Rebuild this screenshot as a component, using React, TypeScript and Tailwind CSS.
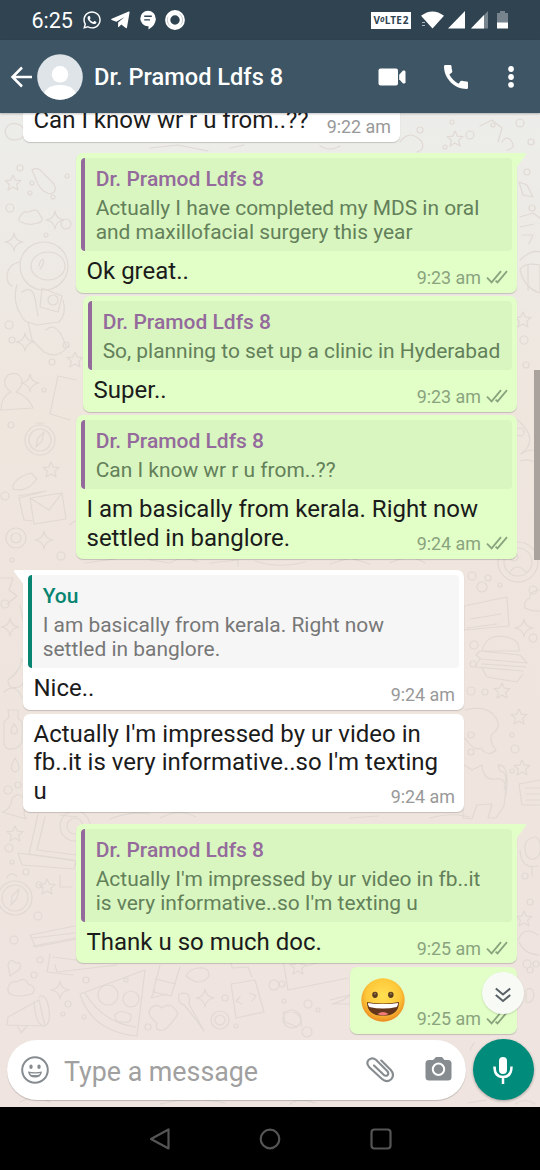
import type { ReactNode } from "react";
import { FaWhatsapp } from "react-icons/fa";

function Doodles() {
  const dots: [number, number, number][] = [
    [20, 168, 3], [32, 183, 2], [53, 197, 2], [10, 208, 4], [66, 224, 5], [30, 193, 2], [67, 176, 2], [46, 235, 2], [12, 340, 3],
    [9, 325, 4], [52, 362, 3], [66, 345, 3], [44, 390, 2], [11, 425, 3], [5, 496, 4], [61, 556, 4], [5, 604, 4], [12, 560, 2],
    [8, 790, 4], [18, 785, 3], [9, 848, 4], [26, 872, 3], [39, 885, 3], [38, 916, 4], [14, 940, 4], [40, 960, 3], [12, 862, 2],
    [86, 980, 3], [68, 1004, 3], [63, 1014, 2], [84, 1017, 2], [126, 980, 2], [148, 1027, 3], [225, 998, 3], [236, 1026, 2], [34, 975, 3],
    [527, 172, 3], [532, 208, 3], [524, 340, 4], [526, 365, 3], [531, 142, 3], [520, 432, 4], [472, 576, 4], [482, 587, 5],
    [474, 645, 4], [533, 638, 4], [471, 691, 4], [485, 692, 3], [488, 578, 3], [500, 585, 2], [473, 664, 3], [533, 590, 4],
    [471, 752, 3], [515, 749, 4], [512, 735, 2], [512, 771, 2], [525, 876, 3], [530, 902, 3], [527, 964, 4], [471, 735, 3],
    [536, 964, 3], [282, 984, 3], [274, 985, 5], [308, 1004, 4], [318, 1010, 2], [307, 1032, 5], [284, 1001, 2], [530, 970, 3],
    [420, 130, 3], [452, 122, 2], [470, 135, 4], [493, 125, 2], [520, 123, 4], [445, 147, 2],
  ];
  const stars: [number, number][] = [
    [13, 183], [51, 470], [15, 834], [47, 887], [455, 139], [502, 691], [519, 717], [522, 768], [524, 919], [298, 967], [75, 360], [523, 320],
  ];
  const sparks: [number, number][] = [
    [55, 220], [14, 242], [25, 342], [30, 383], [44, 540], [10, 627], [60, 990], [205, 998], [524, 628],
  ];
  return (
    <svg className="pointer-events-none absolute inset-0 h-full w-full" viewBox="0 113 540 994" fill="none" stroke="#e1d9d3" strokeWidth="1.2" strokeLinejoin="round" strokeLinecap="round" aria-hidden="true">
      {dots.map(([x, y, r], i) => <circle key={i} cx={x} cy={y} r={r} />)}
      {stars.map(([x, y], i) => (
        <path key={i} transform={`translate(${x} ${y})`} d="M0-8 2.4-2.8 8-2.4 3.6 1.2 5 7 0 4-5 7-3.6 1.2-8-2.4-2.4-2.8Z" />
      ))}
      {sparks.map(([x, y], i) => (
        <path key={i} transform={`translate(${x} ${y})`} d="M0-9Q1-1 9 0 1 1 0 9-1 1-9 0-1-1 0-9Z" />
      ))}
      <path d="M32 170q6-4 12 4l10 10q4 8-4 10-8-2-12-10zM20 217q2-6 9-5 8-5 11 3 5 6-2 8-10 3-17-1-4-2-1-5z" />
      <circle cx="44" cy="266" r="24" /><ellipse cx="48" cy="266" rx="17" ry="14" /><path d="M39 266q1-6 4-7 2 4-3 10M20 262q-12 2-13 14 0 8 5 10M17 285q-6 18 8 36l12 4 22-3q8-8 4-22M22 292q12-8 14 12l2 12M42 288l20 8-4 16-18-5zM28 322l4 18 12 12q14 8 24-6M46 330q8-8 16 6l4 10" />
      <circle cx="53" cy="300" r="5" />
      <path d="m58 376 18 4M58 376l-8 38 20 6M1 410q0-14 10-18Q0 384 8 375q10-5 14 5 0 8-6 12 12 4 17 16Z" />
      <circle cx="40" cy="440" r="15" /><circle cx="40" cy="440" r="11" /><path d="m36 447 2-9 6-6-2 9zM36 423h8M13 485q4-8 18-12l6 6q-10 14-24 10z" />
      <path d="m30 498 32-5 4 26-32 5zm0 0 19 12 13-17M18 496l28-5-27 7 5 22 8 1" />
      <circle cx="16" cy="538" r="10" /><circle cx="16" cy="538" r="5" /><path d="M1 578h12l-4 12 8 6-10 8M20 605l6 30M8 680q14-10 13-22 10 16 0 28-13 5-13-6zM4 692q12-10 18 6M70 525q10-12 10 12" />
      <path d="M8 710h10v8l4 4v20q-6 10-16 6l-2-4v-22l5-5zM14 724q-6 9 0 10 7-2 0-10M15 758q-7 12 0 14 8-2 0-14M2 812q9-2 10-13 8-10 13 3l-1 12 2 5zM38 814l-9 40 45 6M45 817l-8 33 40 5M18 853l58 8-2 8-52-4z" />
      <circle cx="75" cy="826" r="15" /><circle cx="75" cy="826" r="8" />
      <circle cx="15" cy="898" r="17" /><circle cx="15" cy="898" r="13" /><path d="m11 905 1-9 7-7-2 9zM7 878q2-7 10-2M30 935l45-9M33 938l42-5M33 946l42-8M30 935q5 10 5 12l42-8M50 954l-3 18 26 3M53 957l23 3M60 875v12h12M8 965q2-8 8-2 6-2 4 6l-10 7zM8 988q2-8 9-6 8-6 11 2 10 3 4 10-15 4-22 0-3-3-2-6z" />
      <path d="m8 1017 31-17 6 26-38-1zM17 1025l4 8 6-7M39 997q7-5 10 12 2 17-6 17-8-3-9-25" />
      <path d="m80 994 65-24-8 66q-45-4-57-42zm5-1q18 30 51 34" /><circle cx="108" cy="995" r="10" /><circle cx="131" cy="999" r="8" /><path d="M115 1015q5-7 16 0 1 9-8 7-9 1-8-7zM55 965l2 7 60-7M160 965l-7 27 18 4 9-29M155 979l21 5M155 990l-4 8 16-4M186 976q3-7 12-8 12-1 11 8-9 12-23 0zM151 1008q5-5 11 0 9-8 16 6-8 12-14 16-10 2-7-7-12-9-6-15zM179 994q13-4 10 10l15 27q-8-12-20-26-7-2-5-11z" />
      <circle cx="220" cy="1020" r="9" /><circle cx="220" cy="1020" r="5" /><path d="M220 963q12-4 12 5l16-1 4 10M231 984l24-4 9 32-28 6zM240 997l-4 4 6 3M250 993l6 3-4 5M283 960l5 30 60-12M305 966l30-7M330 1000l20-5q-6 6-18 9h18M290 1012h-7l2 10 12 5M293 1012q10 3 8 14" /><circle cx="292" cy="1019" r="9" />
      <path d="M400 142q10-14 22 0 3 8-5 10M480 126l12-6 10 8-4 14M60 127q16 12 34 12M150 148l28-3 30 6M5 130q5-10 15-5 10 8 0 14-14 4-15-9M320 146q10 6 20 0M230 148l14-3M502 142q5-8 10 0 4 6-5 8" />
      <path d="m519 182 8 3 6 12-10-2zM520 217l13-4 7 5M520 227l14-3M522 235h11l-4 9M520 260q12-11 20-8M520 270q4-8 20-5v28q-15-4-20-23M528 265v25M518 420q22 20 3 34 12-8 19 0M520 461q12-4 20 6" />
      <circle cx="518" cy="562" r="20" /><circle cx="518" cy="562" r="14" /><path d="M510 572q7-10 16 0" /><circle cx="514" cy="557" r="4" />
      <path d="m464 606 43-9 2 29-45 4zM470 619l31-5M467 628l30-4M540 590q-12 2-10 8-7 3-5 10 8 4 15 3M482 651q5-20 28-13 10 3 9 13zM480 651l40 4 7 8-46-4-5-4zM482 664l44 3M480 659l-5 8 48 4M482 668l5 9 30 5 6-8" />
      <path d="M465 710q22-6 31 8 6 10-4 16-3 8 4 16-8 8-15-2-7 4-16-10M464 765l8 5 10-5q1 16 14 14 8-2 10 9l-2 18-8 12h-8l4-14-15 1-5 14-9-1V765M504 790q5-18-4-19l-2-6q12-1 8 29M519 784l21-4M519 784l3 21h18M526 788h14M526 794h14M526 800h14" />
      <path d="M110 819q20-8 40-5M160 818q20-10 36-1M350 818l28-2M430 818q20-6 40-1M60 815l18 2M85 563l30-4M150 560l20 3q12-8 28-1M210 563l28-3v6M255 561q25 8 50 1M330 564l20-6 20 6M390 563q20-10 35 0M525 845q2-7 10-8 7 2 5 15-2 8-9 7-7-2-6-14M520 850q1 20 18 16M532 866v10M518 940q6-15 20-5M519 942q5 12 20 13M526 990q7-5 8 6-2 8-8 6z" />
      <path d="M20 1102q15-8 30 0M160 1104q30-8 65-1M290 1104q8-7 25-1M468 1103l18-3M515 1104q10-7 20 0M470 1050l4-7" />
    </svg>
  );
}

function Ticks() {
  return (
    <svg className="h-4 w-[22px]" viewBox="0 0 22 16" fill="none" stroke="currentColor" strokeWidth="1.8" aria-hidden="true">
      <path d="m1 7.600 4.600 4.800L15 1.200M9.600 10.600l1.900 1.800L21 1.200" />
    </svg>
  );
}

function Time({ value, sent = false }: { value: string; sent?: boolean }) {
  return (
    <div className={`relative mr-[4px] -mt-[18px] flex h-5 items-center gap-[5px] self-end text-[17.900px] leading-5 ${sent ? "text-[#8aa37e]" : "text-[#999999]"}`}>
      <span>{value}</span>
      {sent && <Ticks />}
    </div>
  );
}

function Quote({ author, lines, sent = false }: { author: string; lines: string[]; sent?: boolean }) {
  return (
    <div className={`flex shrink-0 overflow-hidden rounded-[4px] ${sent ? "bg-[#d9f6c0]" : "bg-[#f6f6f6]"}`}>
      <div className={`w-1 shrink-0 rounded-l-[3px] ${sent ? "bg-[#94699c]" : "bg-[#088571]"}`} />
      <div className="pt-[9px] pb-[6.500px] pl-[10.700px] text-[20.930px]">
        <div className={`mb-[4.500px] h-6 text-[21px] leading-6 font-medium ${sent ? "text-[#94699c]" : "text-[#088571]"}`}>{author}</div>
        {lines.map((l) => (
          <div key={l} className={`leading-[24.500px] whitespace-nowrap ${sent ? "text-[#63805a]" : "text-[#777777]"}`}>{l}</div>
        ))}
      </div>
    </div>
  );
}

interface BubbleProps {
  sent?: boolean;
  tail?: boolean;
  className: string;
  children: ReactNode;
}

function Bubble({ sent = false, tail = false, className, children }: BubbleProps) {
  const corner = tail ? (sent ? "rounded-tr-none" : "rounded-tl-none") : "";
  return (
    <section className={`relative flex shrink-0 flex-col rounded-[7px] p-[5px] shadow-[0_1px_1px_rgba(0,0,0,0.18)] ${sent ? "mr-[23px] self-end bg-[#e1ffc7]" : "ml-[23px] self-start bg-white"} ${corner} ${className}`}>
      {tail && (
        <svg className={`absolute top-0 h-[15px] w-[11px] ${sent ? "-right-[10px] text-[#e1ffc7]" : "-left-[10px] -scale-x-100 text-white"}`} viewBox="0 0 11 15" aria-hidden="true">
          <path d="M0 0h9.200q1.600.4.500 1.900L1 13.400V15H0Z" fill="currentColor" />
        </svg>
      )}
      {children}
    </section>
  );
}

function Body({ lines, className = "" }: { lines: string[]; className?: string }) {
  return (
    <div className={`pr-[6px] pl-[5.500px] text-[24px] leading-[28.500px] whitespace-nowrap ${className}`}>
      {lines.map((l) => <div key={l}>{l}</div>)}
    </div>
  );
}

function Grin() {
  return (
    <svg className="h-[44px] w-[44px]" viewBox="0 0 44 44" role="img" aria-label="grinning face">
      <defs>
        <radialGradient id="face" cx=".5" cy=".4" r=".6">
          <stop offset="0" stopColor="#ffe052" />
          <stop offset=".65" stopColor="#fdc83a" />
          <stop offset="1" stopColor="#ec8a20" />
        </radialGradient>
      </defs>
      <circle cx="22" cy="22" r="21.700" fill="url(#face)" />
      <ellipse cx="14" cy="16.800" rx="2.800" ry="3.100" fill="#5b3e22" />
      <ellipse cx="29.800" cy="16.800" rx="2.800" ry="3.100" fill="#5b3e22" />
      <circle cx="14" cy="15.700" r=".9" fill="#a9814c" />
      <circle cx="29.800" cy="15.700" r=".9" fill="#a9814c" />
      <path d="M6 24q16 3 32 0 0 13.800-16 13.800T6 24Z" fill="#63351b" />
      <path d="M7 24.900q15 2.400 30 0 .2 2.900-1.300 4.100-13.700 3-27.400 0Q6.800 27.500 7 24.900Z" fill="#fff" />
      <path d="M16.500 36q5.500-4 11 0-5.500 2.800-11 0Z" fill="#f07a78" />
    </svg>
  );
}

function StatusBar() {
  return (
    <div className="flex h-10 shrink-0 items-center bg-[#2f4350] text-white">
      <span className="mt-[2px] ml-[31.500px] w-[50.500px] text-[21.500px] leading-6">6:25</span>
      <FaWhatsapp className="h-5 w-5" />
      <svg className="ml-[9px] h-[18px] w-[19px]" viewBox="0 0 19 18" fill="currentColor"><path d="M18.600 1.200 16 16.600q-.3 1-1.200.4l-4.500-3.500L7.800 16q-.7.500-.7-.5v-4L13.500 6 5.400 10.700.7 9q-1.200-.7 0-1.300L17.700.6q1-.3.900.6Z" /></svg>
      <svg className="ml-[9.500px] h-5 w-4" viewBox="0 0 16 20" fill="currentColor">
        <circle cx="8" cy="8.500" r="7.700" /><path d="M15.700 8.500q0 7-7.200 10.900v-4Z" /><path d="M4.200 6.200h7.600M4.200 9.900H10" stroke="#2f4350" strokeWidth="1.400" />
      </svg>
      <svg className="ml-[9px] h-5 w-5" viewBox="0 0 20 20"><circle cx="10" cy="10" r="7.300" fill="none" stroke="currentColor" strokeWidth="5.200" /><path d="M14.500 3.800a7.700 7.700 0 0 1 1.500 11M5.500 16.200A7.700 7.700 0 0 1 3 6.700" fill="none" stroke="#a8b3b9" strokeWidth=".7" /></svg>
      <div className="ml-auto flex h-[17px] w-10 items-center justify-center bg-white font-['Open_Sans',sans-serif] text-[10px] leading-none font-bold text-[#2f4350]">
        V<span className="-mt-[3px] text-[8px] italic">o</span>LTE<span className="ml-px">2</span>
      </div>
      <svg className="ml-[8.500px] h-[18px] w-6" viewBox="0 0 24 18" fill="currentColor"><path d="M1 4.800Q12.500-4 24 4.800L12.500 17.500Z" /><path d="M2 11h3v1H2zM2 14h3v1H2z" opacity=".6" /></svg>
      <svg className="ml-[4px] h-[18px] w-[17px]" viewBox="0 0 17 18" fill="currentColor"><path d="M17 0v17.500H0Z" /></svg>
      <svg className="ml-[6px] h-[18px] w-[17px]" viewBox="0 0 17 18" fill="currentColor"><path d="M17 0v17.500H0Z" opacity=".35" /><path d="M13 4v13.500H0Z" /></svg>
      <svg className="mr-[32px] ml-[9.500px] h-[18px] w-[11px]" viewBox="0 0 11 18" fill="currentColor"><path d="M0 2h3V0h5v2h3v10H0Z" opacity=".35" /><path d="M0 11.500h11v6H0Z" /></svg>
    </div>
  );
}

function Header() {
  return (
    <header className="relative z-10 flex h-[73px] shrink-0 items-center bg-[#3d5564] text-white shadow-[0_1px_2px_rgba(0,0,0,0.25)]">
      <svg className="ml-[10px] h-[22px] w-[23px]" viewBox="0 0 23 22" fill="none" stroke="currentColor" strokeWidth="2.500"><path d="M22 11H3M12 1.500 2.500 11l9.500 9.500" /></svg>
      <svg className="ml-[4px] h-[46px] w-[46px]" viewBox="0 0 46 46">
        <defs><clipPath id="avatar"><circle cx="23" cy="23" r="22.800" /></clipPath></defs>
        <g clipPath="url(#avatar)"><path d="M0 0h46v46H0z" fill="#dfe4e8" /><circle cx="23" cy="20.300" r="8.300" fill="#fff" /><path d="M6 46q0-15 17-15t17 15Z" fill="#fff" /></g>
      </svg>
      <h1 className="ml-[11px] text-[23.600px] leading-7 font-medium">Dr. Pramod Ldfs 8</h1>
      <svg className="ml-auto h-[18px] w-[28px]" viewBox="0 0 28 18" fill="currentColor"><rect x=".5" y=".6" width="19.500" height="16.800" rx="2" /><path d="M21.200 6.700 25 2.500q2.300-.5 2.500 1.300v10.400q-.2 1.800-2.500 1.300l-3.800-4.200Z" /></svg>
      <svg className="ml-[34px] h-8 w-8" viewBox="0 0 24 24" fill="currentColor"><path d="M20.010 15.380c-1.230 0-2.420-.2-3.530-.56a.977.977 0 0 0-1.010.24l-1.570 1.970c-2.830-1.350-5.480-3.900-6.890-6.830l1.950-1.660c.27-.28.35-.67.24-1.020-.37-1.110-.56-2.300-.56-3.530 0-.54-.45-.99-.99-.99H4.190C3.650 3 3 3.240 3 3.990 3 13.280 10.730 21 20.010 21c.71 0 .99-.63.99-1.180v-3.450c0-.54-.45-.99-.99-.99z" /></svg>
      <svg className="mr-[26px] ml-[36px] h-6 w-[6px]" viewBox="0 0 6 24" fill="currentColor"><circle cx="3" cy="4" r="2.900" /><circle cx="3" cy="12" r="2.900" /><circle cx="3" cy="19.800" r="2.900" /></svg>
    </header>
  );
}

function Composer() {
  return (
    <footer className="relative flex h-[70px] shrink-0 items-start pt-[3px] pl-[7px]">
      <div className="flex h-[60px] w-[459px] items-center rounded-full bg-white text-[#868c90] shadow-[0_1px_1px_rgba(0,0,0,0.2)]">
        <svg className="ml-[14px] h-7 w-7" viewBox="0 0 28 28"><circle cx="14" cy="14" r="12.800" fill="none" stroke="currentColor" strokeWidth="2" /><ellipse cx="10" cy="10.700" rx="1.700" ry="2.300" fill="currentColor" /><ellipse cx="18" cy="10.700" rx="1.700" ry="2.300" fill="currentColor" /><path d="M7 15.400q7 1.600 14 0-.8 6.200-7 6.200t-7-6.200Z" fill="currentColor" /><path d="M9 17.100q5 1 10 0-.4 1.400-1 1.600-4 .8-8 0Z" fill="#fff" /></svg>
        <span className="mt-[3px] ml-[15px] text-[26.800px] leading-8 text-[#a0a0a0]">Type a message</span>
        <svg className="mt-px mr-[31px] ml-auto h-[28px] w-[28px]" viewBox="0 0 28 28" fill="none" stroke="currentColor" strokeWidth="2.100" strokeLinecap="round"><path d="m15.300 3.600 9.500 9.400q4.200 5 .4 9.200-4.600 4-9.200-.2L3.300 10.300q-3.700-4.200-.5-7.600 3.700-3 7.400.4l11 10.900q2 2.400.4 4.100-2 1.500-4.200-.5L8 8.400" /></svg>
        <svg className="mr-[14.500px] -mt-[2px] h-[26px] w-[27px]" viewBox="0 0 27 26"><path d="M4 4h4l3-3h6l2.500 3H23q3.500 0 3.500 3.500V21q0 3.500-3.500 3.500H4Q.5 24.500.5 21V7.500Q.5 4 4 4Z" fill="currentColor" /><circle cx="13.500" cy="13.200" r="5.700" fill="none" stroke="#fff" strokeWidth="2" /></svg>
      </div>
      <button className="-mt-px ml-[6.500px] flex h-[61px] w-[61px] items-center justify-center rounded-full bg-[#008b7b] text-white shadow-[0_1px_3px_rgba(0,0,0,0.3)]" aria-label="Record">
        <svg className="h-[28px] w-5" viewBox="0 0 20 28"><rect x="6" y="1" width="8" height="17" rx="4" fill="currentColor" /><path d="M1.500 10.500q0 10.500 8.500 10.500t8.500-10.500M10 21v7" fill="none" stroke="currentColor" strokeWidth="2.500" /></svg>
      </button>
    </footer>
  );
}

function NavBar() {
  return (
    <nav className="flex h-[63px] shrink-0 items-center bg-black pl-[149px] text-[#555555]">
      <svg className="h-[22px] w-[22px]" viewBox="0 0 22 22" fill="none" stroke="currentColor" strokeWidth="2.200" strokeLinejoin="round"><path d="M19.500 1.500v19L2 11Z" /></svg>
      <svg className="ml-[88px] h-[22px] w-[22px]" viewBox="0 0 22 22" fill="none" stroke="currentColor" strokeWidth="2.200"><circle cx="11" cy="11" r="9.300" /></svg>
      <svg className="ml-[89px] h-[22px] w-[22px]" viewBox="0 0 22 22" fill="none" stroke="currentColor" strokeWidth="2.200"><rect x="1.500" y="1.500" width="19" height="19" rx="3" /></svg>
    </nav>
  );
}

const doctor = "Dr. Pramod Ldfs 8";

export default function App() {
  return (
    <div className="flex h-[1170px] w-[540px] flex-col overflow-hidden bg-black font-[Roboto,sans-serif] text-[#1b1b1b]">
      <StatusBar />
      <Header />
      <main className="relative flex min-h-0 flex-1 flex-col overflow-hidden bg-linear-to-b from-[#ecedea] via-[#efe6de] via-30% to-[#efe4df]">
        <Doodles />
        <div className="relative flex min-h-0 flex-1 flex-col">
          <Bubble className="-mt-[12px] h-[41px] w-[377px]">
            <Body lines={["Can I know wr r u from..??"]} />
            <Time value="9:22 am" />
          </Bubble>
          <Bubble sent tail className="mt-[11px] h-[140px] w-[441px]">
            <Quote sent author={doctor} lines={["Actually I have completed my MDS in oral", "and maxillofacial surgery this year"]} />
            <Body className="mt-[6px]" lines={["Ok great.."]} />
            <Time sent value="9:23 am" />
          </Bubble>
          <Bubble sent className="mt-[3px] h-[116px] w-[434px]">
            <Quote sent author={doctor} lines={["So, planning to set up a clinic in Hyderabad"]} />
            <Body className="mt-[6.500px]" lines={["Super.."]} />
            <Time sent value="9:23 am" />
          </Bubble>
          <Bubble sent className="mt-[3px] h-[144px] w-[441px]">
            <Quote sent author={doctor} lines={["Can I know wr r u from..??"]} />
            <Body className="mt-[6.500px]" lines={["I am basically from kerala. Right now", "settled in banglore."]} />
            <Time sent value="9:24 am" />
          </Bubble>
          <Bubble tail className="mt-[11px] h-[140px] w-[441px]">
            <Quote author="You" lines={["I am basically from kerala. Right now", "settled in banglore."]} />
            <Body className="mt-[6px]" lines={["Nice.."]} />
            <Time value="9:24 am" />
          </Bubble>
          <Bubble className="mt-[4px] h-[98px] w-[441px]">
            <Body className="mt-[0.500px]" lines={["Actually I'm impressed by ur video in", "fb..it is very informative..so I'm texting", "u"]} />
            <Time value="9:24 am" />
          </Bubble>
          <Bubble sent tail className="mt-[12px] h-[139px] w-[441px]">
            <Quote sent author={doctor} lines={["Actually I'm impressed by ur video in fb..it", "is very informative..so I'm texting u"]} />
            <Body className="mt-[6px]" lines={["Thank u so much doc."]} />
            <Time sent value="9:25 am" />
          </Bubble>
          <Bubble sent className="mt-[4px] h-[67px] w-[167px]">
            <div className="mt-[6px] ml-[5.500px] h-[51px]"><Grin /></div>
            <Time sent value="9:25 am" />
          </Bubble>
          <div className="absolute top-[257px] right-0 h-[190px] w-[6px] bg-[#aaa39d]" />
          <button className="absolute top-[859px] right-[16px] flex h-[42px] w-[42px] items-center justify-center rounded-full bg-[#f8fbf5] text-[#596066] shadow-[0_1px_2px_rgba(0,0,0,0.15)]" aria-label="Scroll to bottom">
            <svg className="mt-[3px] h-4 w-4" viewBox="0 0 16 16" fill="none" stroke="currentColor" strokeWidth="2"><path d="m.8 1.500 7.200 6 7.200-6M.8 8l7.200 6 7.200-6" /></svg>
          </button>
        </div>
        <Composer />
      </main>
      <NavBar />
    </div>
  );
}
